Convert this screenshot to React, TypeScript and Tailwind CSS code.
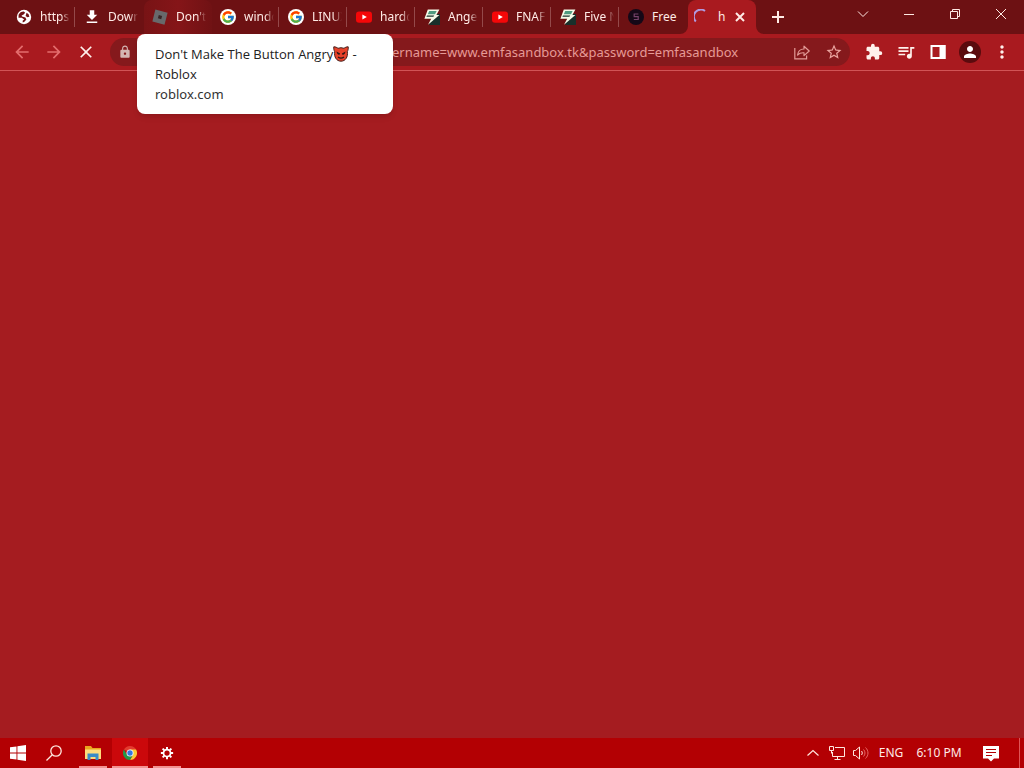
import type { ReactNode } from "react";
import { FcGoogle } from "react-icons/fc";
import { MdExtension, MdQueueMusic, MdMoreVert, MdPerson, MdStarOutline, MdLock, MdArrowBack, MdArrowForward, MdClose, MdFileDownload } from "react-icons/md";

const GlobeIcon = () => (
  <svg viewBox="0 0 16 16" className="size-4">
    <circle cx="8" cy="8" r="7.2" fill="#fff" />
    <path d="M2.6 5.8C3.6 3.6 5.6 2.4 7.8 2.5L9.2 3.8 7.6 5.4 5.6 6.4l.4 1.2 3.4.8L10.4 10.6 8.4 12.8l-1.6.6-.2-1.6 1.6-1.4-2.4-1.6H2.5Z" fill="#711315" />
    <path d="m10.6 3.8 2 1.4.8 2.6-2 .4-1.8-1.2Z" fill="#711315" />
  </svg>
);

const DownloadIcon = () => <MdFileDownload className="-mx-px size-[18px] text-white" />;

const RobloxIcon = () => (
  <svg viewBox="0 0 16 16" className="size-4">
    <path d="M3.4.6 15.6 3.7 12.5 15.7.4 12.5Z" fill="#68696b" />
    <path d="m6.8 6 3.3.9-.9 3.3-3.3-.9Z" fill="#3a2626" />
  </svg>
);

const GoogleIcon = () => (
  <span className="flex size-4 items-center justify-center rounded-full bg-white">
    <FcGoogle className="size-[14px]" />
  </span>
);

const YoutubeIcon = () => (
  <svg viewBox="0 0 16 16" className="size-4">
    <rect y="2.4" width="16" height="11.4" rx="3" fill="#f50708" />
    <path d="m6.4 5.6 4.4 2.5-4.4 2.5Z" fill="#fff" />
  </svg>
);

const BoltIcon = () => (
  <svg viewBox="0 0 16 16" className="size-4">
    <path d="M9 5h7v11H5Z" fill="#18302b" />
    <path d="M3.8.4H15.4L12.4 6H15.4L4 15.8 7.2 9.8H.4Z" fill="#f6fbe9" />
    <path d="M5.2 2h7.4L11 5.2H3.8Z" fill="#4f9b80" />
    <path d="M3 6.400h7.200l-.8 1.400H2.400Z" fill="#16312b" />
  </svg>
);

const DarkIcon = () => (
  <svg viewBox="0 0 16 16" className="size-4">
    <circle cx="8" cy="8" r="8" fill="#150817" />
    <path d="M10.4 5H6.2v2.7h4v2.8H5.8" fill="none" stroke="#75426a" strokeWidth="1.2" />
  </svg>
);

const SpinnerIcon = () => (
  <svg viewBox="0 0 16 16" className="size-4">
    <path d="M1.8 12.5A7 7 0 0 1 11 2" fill="none" stroke="#b09adf" strokeWidth="2" />
  </svg>
);

const DevilIcon = () => (
  <svg viewBox="0 0 16 16" className="inline-block size-4 align-[-3px]" role="img" aria-label="angry devil">
    <path d="M.8.8C2.5.8 4 1.5 5 2.3a8 8 0 0 1 6 0c1-.8 2.5-1.5 4.2-1.5.3 2-.2 3.6-.9 4.9.9 5.2-1.9 9.5-6.3 9.5S.8 10.9 1.7 5.7C1 4.4.5 2.8.8.8Z" fill="#e8422a" stroke="#45211d" />
    <path d="m3.5 5.5 3.6 2c-.2 1.900-3 1.900-3.600-2ZM12.500 5.500l-3.600 2c.2 1.900 3 1.900 3.600-2Z" fill="#2b1717" />
    <path d="M5 11c1.800 1.400 4.200 1.400 6 0" fill="none" stroke="#2b1717" strokeWidth="1.2" />
  </svg>
);

const tabs = [
  { title: "https", icon: GlobeIcon, divider: true },
  { title: "Down", icon: DownloadIcon, divider: false },
  { title: "Don't", icon: RobloxIcon, divider: false, hovered: true },
  { title: "windo", icon: GoogleIcon, divider: true },
  { title: "LINUX", icon: GoogleIcon, divider: true },
  { title: "hardc", icon: YoutubeIcon, divider: true },
  { title: "Ange", icon: BoltIcon, divider: true },
  { title: "FNAF", icon: YoutubeIcon, divider: true },
  { title: "Five N", icon: BoltIcon, divider: true },
  { title: "Free", icon: DarkIcon, divider: false },
];

const ToolButton = ({ label, children }: { label: string; children: ReactNode }) => (
  <button aria-label={label} className="flex h-7 w-8 shrink-0 items-center justify-center text-[#fff1ec]">
    {children}
  </button>
);

const WindowButton = ({ label, d }: { label: string; d: string }) => (
  <button aria-label={label} className="flex h-7 w-[46px] items-center justify-center">
    <svg viewBox="0 0 12 12" className="size-3" fill="none" stroke="#ffe9e3">
      <path d={d} />
    </svg>
  </button>
);

const TabStrip = () => (
  <div className="flex h-[34px] bg-[#6d1113] pl-2">
    {tabs.map(({ title, icon: Icon, divider, hovered }) => (
      <button
        key={title}
        className={`flex w-17 min-w-0 items-center gap-2 pl-2 ${hovered ? "rounded-t-lg bg-linear-to-r from-[#781315] via-[#851518] to-[#701214]" : ""}`}
      >
        <span className="shrink-0"><Icon /></span>
        <span className={`w-[30px] shrink-0 overflow-hidden text-left whitespace-nowrap ${title === "Free" ? "" : "mask-r-from-70% mask-r-to-100%"}`}>{title}</span>
        <span className={`-ml-1 h-5 w-px shrink-0 ${divider ? "bg-[#94494a]" : ""}`} />
      </button>
    ))}
    <div className="relative flex w-17 items-center rounded-t-lg bg-[#a91a1f] pl-1.5">
      <svg viewBox="0 0 8 8" className="absolute bottom-0 -left-2 size-2 fill-[#a91a1f]"><path d="M8 0v8H0a8 8 0 0 0 8-8Z" /></svg>
      <svg viewBox="0 0 8 8" className="absolute -right-2 bottom-0 size-2 fill-[#a91a1f]"><path d="M0 0v8h8a8 8 0 0 1-8-8Z" /></svg>
      <SpinnerIcon />
      <span className="ml-2 w-4">h</span>
      <button aria-label="Close tab">
        <svg viewBox="0 0 12 12" className="size-3" stroke="#ffebe6" strokeWidth="2"><path d="m2 2 8 8M10 2l-8 8" /></svg>
      </button>
    </div>
    <button aria-label="New tab" className="ml-3 flex w-5 items-center justify-center">
      <svg viewBox="0 0 12 12" className="size-3" stroke="#ffebe6" strokeWidth="2"><path d="M6 0v12M0 6h12" /></svg>
    </button>
    <div className="ml-auto flex items-start">
      <WindowButton label="Search tabs" d="m1 3.5 5 5 5-5" />
      <WindowButton label="Minimize" d="M1 6.5h10" />
      <WindowButton label="Restore" d="M1.5 3.5h7v7h-7zM3.5 3.500v-2h7v7h-2" />
      <WindowButton label="Close" d="m1 1 10 10M11 1 1 11" />
    </div>
  </div>
);

const Toolbar = () => (
  <div className="flex h-[37px] items-center border-b border-[#d15456] bg-[#a91a1f] px-1.5">
    <button aria-label="Back" className="flex w-8 shrink-0 justify-center text-[#e36d6d]"><MdArrowBack className="size-5" /></button>
    <button aria-label="Forward" className="flex w-8 shrink-0 justify-center text-[#e36d6d]"><MdArrowForward className="size-5" /></button>
    <ToolButton label="Stop"><MdClose className="size-5" /></ToolButton>
    <div className="mx-2 flex h-7 min-w-0 flex-1 items-center rounded-full bg-[#85191c]">
      <MdLock className="ml-2 size-[14px] shrink-0 text-[#d4b5b2]" />
      <input
        aria-label="Address"
        readOnly
        value="ername=www.emfasandbox.tk&password=emfasandbox"
        className="ml-[260px] min-w-0 flex-1 bg-transparent pt-0.5 text-[13px] text-[#e69a96] outline-none"
      />
      <button aria-label="Share" className="flex w-8 shrink-0 justify-center">
        <svg viewBox="0 0 16 16" className="size-4" fill="none" stroke="#e29b97" strokeWidth="1.2">
          <path d="M.8 4v10.8h11.800V11.500" />
          <path d="M3.600 11c.4-3.800 2.700-6 6.400-6V2.200L15.200 7 10 11.600V8.800C7.200 8.600 5.200 9.300 3.600 11Z" strokeLinejoin="round" />
        </svg>
      </button>
      <button aria-label="Bookmark" className="flex w-8 shrink-0 justify-center text-[#eaa5a0]"><MdStarOutline className="size-[18px]" /></button>
    </div>
    <ToolButton label="Extensions"><MdExtension className="size-[18px]" /></ToolButton>
    <ToolButton label="Media"><MdQueueMusic className="size-5" /></ToolButton>
    <ToolButton label="Side panel">
      <svg viewBox="0 0 16 16" className="size-4">
        <path d="M1.5 2h13v12h-13Z" fill="none" stroke="#fff" strokeWidth="2" />
        <path d="M9.5 1h6v14h-6Z" fill="#fff" />
      </svg>
    </ToolButton>
    <ToolButton label="Profile">
      <span className="flex size-[22px] items-center justify-center rounded-full bg-[#5b0b0e]"><MdPerson className="size-[18px] text-white" /></span>
    </ToolButton>
    <ToolButton label="Menu"><MdMoreVert className="size-5" /></ToolButton>
  </div>
);

const TabTooltip = () => (
  <div className="absolute top-[34px] left-[137px] w-64 rounded-lg bg-white px-[18px] py-2.5 font-['Open_Sans',sans-serif] text-[13px] leading-5 text-[#333] shadow-md">
    <p className="font-medium text-[#222]">
      Don't Make The Button Angry<DevilIcon /> - Roblox
    </p>
    <p className="font-['Noto_Sans',sans-serif]">roblox.com</p>
  </div>
);

const FolderIcon = () => (
  <svg viewBox="0 0 18 16" className="h-4 w-[18px]">
    <path d="M1 1h6l1.5 2H17v11H1Z" fill="#e9a51f" />
    <path d="M1 4.5h16V14H1Z" fill="#ffdc7c" />
    <path d="M3.5 8.5h11V15h-3v-3h-5v3h-3Z" fill="#3b8bc7" />
  </svg>
);

const ChromeIcon = () => (
  <svg viewBox="0 0 16 16" className="size-[14px]">
    <path d="M8 8 1.07 4A8 8 0 0 1 14.93 4Z" fill="#e33b2e" />
    <path d="M8 4h6.93A8 8 0 0 1 8 16l3.46-6Z" fill="#fcc934" />
    <path d="M1.07 4 4.54 10 8 12l3.46-2L8 16A8 8 0 0 1 1.07 4Z" fill="#24994a" />
    <circle cx="8" cy="8" r="4" fill="#fff" />
    <circle cx="8" cy="8" r="3.1" fill="#3578df" />
  </svg>
);

const GearIcon = () => (
  <svg viewBox="0 0 16 16" className="size-[14px]" fill="none" stroke="#fff">
    <circle cx="8" cy="8" r="4" strokeWidth="2" />
    <path d="M8 1v2.5M8 12.5V15M1 8h2.5M12.5 8H15M3 3l1.9 1.9M11.1 11.1 13 13M3 13l1.9-1.9M11.1 4.9 13 3" strokeWidth="2.2" />
  </svg>
);

const apps = [
  { label: "File Explorer", icon: FolderIcon, bar: "w-7" },
  { label: "Chrome", icon: ChromeIcon, bar: "w-9", active: true },
  { label: "Settings", icon: GearIcon, bar: "w-7" },
];

const Taskbar = () => (
  <div className="flex h-[30px] items-stretch bg-[#b30003]">
    <button aria-label="Start" className="flex w-9 items-center justify-center">
      <svg viewBox="0 0 16 16" className="size-4 fill-white">
        <path d="M0 2.3 6.5 1.4v6.1H0ZM7.4 1.3 16 0v7.5H7.4ZM0 8.5h6.5v6.1L0 13.7ZM7.4 8.5H16V16l-8.6-1.3Z" />
      </svg>
    </button>
    <button aria-label="Search" className="flex w-9 items-center justify-center">
      <svg viewBox="0 0 16 16" className="size-4" fill="none" stroke="#ffe7df" strokeWidth="1.3">
        <circle cx="10" cy="6" r="5.2" />
        <path d="M6.3 9.7.5 15.5" />
      </svg>
    </button>
    <div className="ml-[3px] flex gap-px">
      {apps.map(({ label, icon: Icon, bar, active }) => (
        <button key={label} aria-label={label} className={`flex w-9 flex-col items-center ${active ? "bg-[#cb080b]" : ""}`}>
          <span className="flex flex-1 items-center pt-0.5"><Icon /></span>
          <span className={`h-0.5 bg-[#f29392] ${bar}`} />
        </button>
      ))}
    </div>
    <div className="ml-auto flex items-center">
      <button aria-label="Show hidden icons" className="flex w-6 justify-center">
        <svg viewBox="0 0 12 12" className="size-3" fill="none" stroke="#ffe7df" strokeWidth="1.2"><path d="m.5 8.5 5.5-5 5.5 5" /></svg>
      </button>
      <button aria-label="Network" className="flex w-6 justify-center">
        <svg viewBox="0 0 16 16" className="size-4" fill="none" stroke="#ffe7df">
          <path d="M6 2.5h9.5v9H3.5V7M8.5 11.5v3M5.5 14.5h6M.5 1.500h4v4h-4zM2.500 5.500v3" />
        </svg>
      </button>
      <button aria-label="Volume" className="flex w-6 justify-center">
        <svg viewBox="0 0 16 16" className="size-4" fill="none" stroke="#ffe7df">
          <path d="M.5 5.5h2l4-3.5v12l-4-3.5h-2zM8.5 6c1 1.2 1 2.8 0 4" />
          <path d="M10.5 4.5c2 2 2 5 0 7M12.5 2.500c3.300 3.200 3.300 7.800 0 11" stroke="#e86a67" />
        </svg>
      </button>
      <span className="w-9 text-center">ENG</span>
      <span className="ml-1.5 w-12 text-center whitespace-nowrap">6:10 PM</span>
      <button aria-label="Notifications" className="mx-5 flex w-4 justify-center">
        <svg viewBox="0 0 16 17" className="h-[17px] w-4">
          <path d="M0 1h16v12.5h-5L8 16.5l-3-3H0Z" fill="#fff" />
          <path d="M3 4.5h10M3 7.5h10M3 10.5h6" stroke="#b30003" />
        </svg>
      </button>
      <button aria-label="Show desktop" className="h-[30px] w-[5px] border-l border-[#df5557]" />
    </div>
  </div>
);

const App = () => {
  return (
    <div className="relative flex min-h-screen flex-col overflow-hidden bg-[#a51c20] font-['Noto_Sans','Open_Sans',sans-serif] text-xs text-[#ffebe6]">
      <TabStrip />
      <Toolbar />
      <main className="flex-1" />
      <Taskbar />
      <TabTooltip />
    </div>
  );
};

export default App;
